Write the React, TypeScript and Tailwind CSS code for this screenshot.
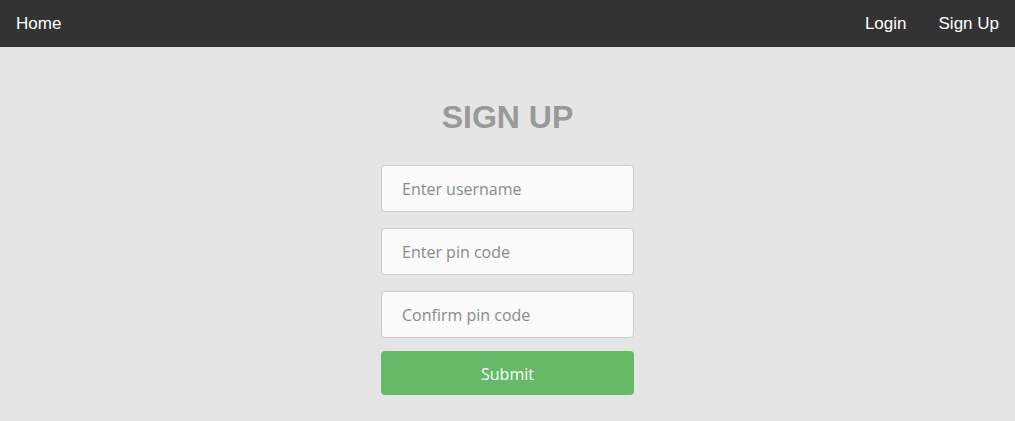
export default function App() {
  return (
    <div className="min-h-[421px] bg-[#e5e5e5] font-['Liberation_Sans',Arial,sans-serif]">
      {/* Nav */}
      <nav className="flex h-[47px] items-center justify-between bg-[#333333] text-[17px] text-white">
        <a className="px-4" href="#">Home</a>
        <div className="flex">
          <a className="px-4" href="#">Login</a>
          <a className="px-4" href="#">Sign Up</a>
        </div>
      </nav>

      {/* Form */}
      <div className="flex flex-col items-center pt-[50px]">
        <h1 className="text-[32px] font-bold leading-[40px] text-[#999999]">SIGN UP</h1>
        <form className="mt-[28px] flex w-[253px] flex-col" onSubmit={(e) => e.preventDefault()}>
          <input
            className="mb-[16px] h-[47px] rounded-[4px] border border-[#cccccc] bg-[#fafafa] px-[20px] font-['Open_Sans',sans-serif] text-[16px] text-[#555] outline-none placeholder:text-[#8a8a8a]"
            placeholder="Enter username"
          />
          <input
            className="mb-[16px] h-[47px] rounded-[4px] border border-[#cccccc] bg-[#fafafa] px-[20px] font-['Open_Sans',sans-serif] text-[16px] text-[#555] outline-none placeholder:text-[#8a8a8a]"
            placeholder="Enter pin code"
            type="password"
          />
          <input
            className="mb-[13px] h-[47px] rounded-[4px] border border-[#cccccc] bg-[#fafafa] px-[20px] font-['Open_Sans',sans-serif] text-[16px] text-[#555] outline-none placeholder:text-[#8a8a8a]"
            placeholder="Confirm pin code"
            type="password"
          />
          <button
            className="h-[44px] rounded-[4px] bg-[#66b967] pt-[2px] font-['Open_Sans',sans-serif] text-[16px] text-white"
            type="submit"
          >
            Submit
          </button>
        </form>
      </div>
    </div>
  )
}
